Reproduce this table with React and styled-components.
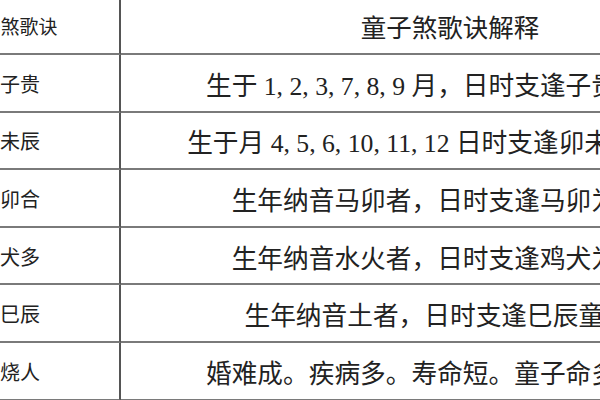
import React from "react";
import styled, { createGlobalStyle } from "styled-components";

const Global = createGlobalStyle`
  html, body {
    margin: 0;
    padding: 0;
    background: #ffffff;
    overflow: hidden;
  }
  body {
    width: 600px;
    height: 400px;
  }
`;

const Table = styled.div`
  display: grid;
  grid-template-columns: 220px 658px;
  grid-auto-rows: 57.6px;
  width: 878px;
  margin: -2.6px 0 0 -99px;
  font-family: "Liberation Serif", "Noto Sans CJK SC", serif;
  color: #222222;
`;

const Cell = styled.div`
  display: flex;
  align-items: center;
  justify-content: center;
  white-space: nowrap;
  border-bottom: 2px solid #7a7a7a;
  box-sizing: border-box;
  font-size: ${(p) => p.$size}px;
  ${(p) => (p.$left ? "border-right: 2px solid #555555;" : "")}
  padding-top: 1px;
`;

const rows = [
  ["寅子贵", "生于 1, 2, 3, 7, 8, 9 月，日时支逢子贵为童子"],
  ["卯未辰", "生于月 4, 5, 6, 10, 11, 12 日时支逢卯未辰为童子"],
  ["马卯合", "生年纳音马卯者，日时支逢马卯为童子"],
  ["鸡犬多", "生年纳音水火者，日时支逢鸡犬为童子"],
  ["逢巳辰", "生年纳音土者，日时支逢巳辰童子煞"],
  ["不烧人", "婚难成。疾病多。寿命短。童子命多灾多难"],
];

export default function App() {
  return (
    <>
      <Global />
      <Table>
        <Cell $left $size={19}>童子煞歌诀</Cell>
        <Cell $size={25.5}>童子煞歌诀解释</Cell>
        {rows.map((r, i) => (
          <React.Fragment key={i}>
            <Cell $left $size={20}>{r[0]}</Cell>
            <Cell $size={25.7}>{r[1]}</Cell>
          </React.Fragment>
        ))}
      </Table>
    </>
  );
}
